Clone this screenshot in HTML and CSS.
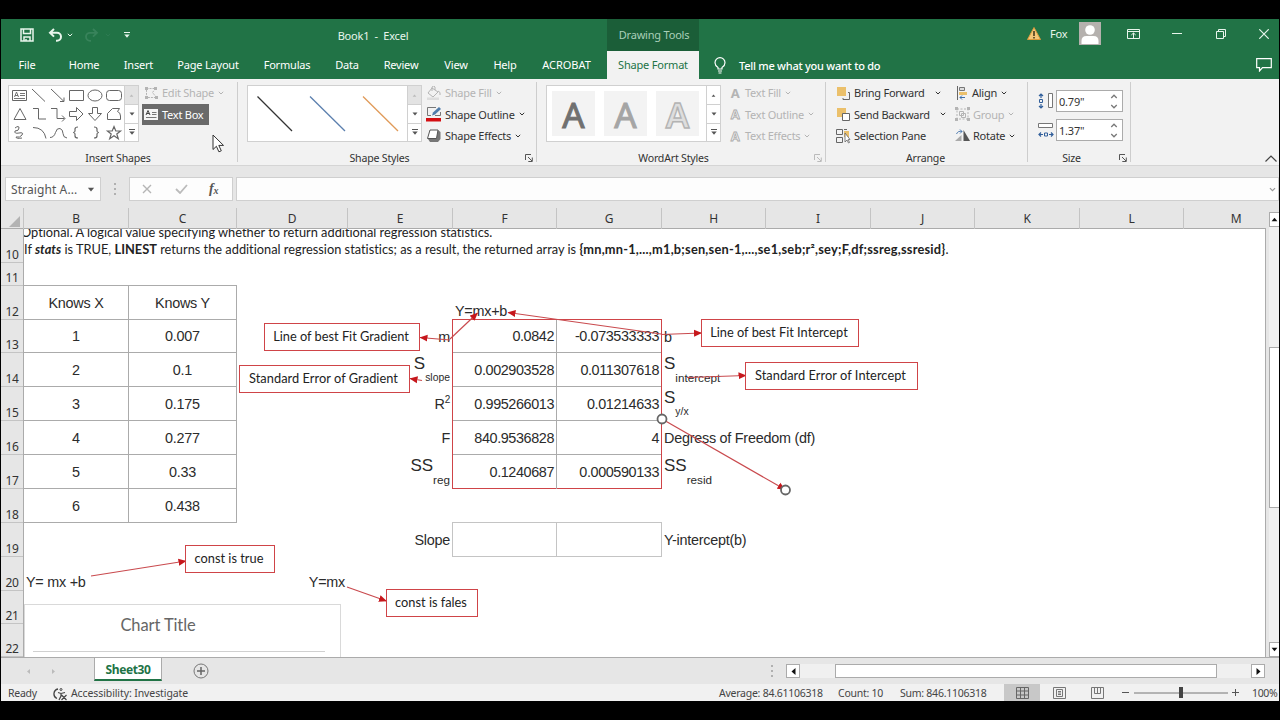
FILE: index.html
```html
<!DOCTYPE html>
<html lang="en">
<head>
    <meta charset="UTF-8" />
    <meta name="viewport" content="width=device-width, initial-scale=1.0"/>
    <title>Book1 - Excel</title>
    <link rel="stylesheet" href="styles.css">
</head>
<body>

    <!-- Shared icons -->
    <svg class="sprite" width="0" height="0">
        <symbol id="chev" viewBox="0 0 6 4"><path d="M.8 .8 L3 3 L5.2 .8" fill="none" stroke="currentColor"/></symbol>
        <symbol id="up" viewBox="0 0 6 4"><path d="M.5 3.5h5L3 .5z" fill="currentColor"/></symbol>
        <symbol id="down" viewBox="0 0 6 4"><path d="M.5 .5h5L3 3.5z" fill="currentColor"/></symbol>
        <symbol id="more" viewBox="0 0 6 6"><path d="M0 .5h6" stroke="currentColor"/><path d="M.3 2.5h5.4L3 5.8z" fill="currentColor"/></symbol>
        <symbol id="launch" viewBox="0 0 8 8"><path d="M.5 6V.5H6M3 3l4 4M7.3 3.5v4h-4" fill="none" stroke="currentColor"/></symbol>
    </svg>

    <div class="window">
        <!-- Title bar -->
        <header class="titlebar">
            <div class="quick">
                <svg class="save" width="14" height="14" viewBox="0 0 14 14"><path d="M1 1h12v12H1zM3.500 1v4.500h7V1M4 13V9h6v4M6 11v2" fill="none" stroke="currentColor" stroke-width="1.500"/></svg>
                <svg class="undo" width="15" height="14" viewBox="0 0 15 14"><path d="M6 1L2 4.8 6 8.6M2 4.8h7a4 4 0 0 1 0 8H8" fill="none" stroke="currentColor" stroke-width="2"/></svg>
                <svg class="undo-more" width="6" height="4"><use href="#chev"/></svg>
                <svg class="redo" width="15" height="14" viewBox="0 0 15 14"><path d="M9 1l4 3.8L9 8.6M13 4.8H6a4 4 0 0 0 0 8h1" fill="none" stroke="currentColor" stroke-width="1.8"/></svg>
                <svg class="redo-more" width="6" height="4"><use href="#chev"/></svg>
                <svg class="customize" width="6" height="6"><use href="#more"/></svg>
            </div>
            <div class="doc-title">Book1&nbsp; -&nbsp; Excel</div>
            <div class="context-tab">Drawing Tools</div>
            <div class="account">
                <svg width="14" height="13" viewBox="0 0 14 13"><path d="M7 .5L13.5 12.5H.5z" fill="#f3c87a" stroke="#d99a3c"/><path d="M7 4v5M7 10v1.5" stroke="#3d3216" stroke-width="1.5"/></svg>
                <span class="user">Fox</span>
                <svg class="avatar" width="22" height="23" viewBox="0 0 22 23"><path d="M0 0h22v23H0z" fill="#b5b1ae"/><circle cx="11" cy="8" r="4.8" fill="#fff"/><path d="M2.5 22v-3q0-5 5-5h7q5 0 5 5v3z" fill="#fff"/></svg>
                <svg class="display" width="13" height="10" viewBox="0 0 13 10"><path d="M.5 .5h12v9H.5zM.5 2.5h12M6.5 9V4M4.3 6l2.2-2L8.7 6" fill="none" stroke="currentColor"/></svg>
                <svg class="minimize" width="10" height="10" viewBox="0 0 10 10"><path d="M0 4.5h10" stroke="currentColor"/></svg>
                <svg class="restore" width="10" height="10" viewBox="0 0 10 10"><path d="M.5 2.5h7v7h-7zM2.5 2.5v-2h7v7h-2" fill="none" stroke="currentColor"/></svg>
                <svg class="close" width="10" height="10" viewBox="0 0 10 10"><path d="M.3 .3l9.4 9.4M9.7 .3L.3 9.7" stroke="currentColor" stroke-width="1.2"/></svg>
            </div>
        </header>

        <!-- Ribbon tabs -->
        <nav class="tabs">
            <a class="tab file">File</a>
            <a class="tab home">Home</a>
            <a class="tab insert">Insert</a>
            <a class="tab layout">Page Layout</a>
            <a class="tab formulas">Formulas</a>
            <a class="tab data">Data</a>
            <a class="tab review">Review</a>
            <a class="tab view">View</a>
            <a class="tab help">Help</a>
            <a class="tab acrobat">ACROBAT</a>
            <a class="tab active">Shape Format</a>
            <svg class="bulb" width="12" height="17" viewBox="0 0 12 17"><path d="M4 12V10.5Q1 8.500 1 5.700A5 5 0 0 1 11 5.700Q11 8.500 8 10.500V12zM4 14h4M4.500 16h3" fill="none" stroke="currentColor" stroke-width="1.2"/></svg>
            <span class="tell">Tell me what you want to do</span>
            <svg class="comment" width="16" height="14" viewBox="0 0 16 14"><path d="M.7 .7h14.600v9H6.500L3.500 13V9.700H.7z" fill="none" stroke="currentColor" stroke-width="1.200"/></svg>
        </nav>

        <!-- Ribbon -->
        <section class="ribbon">
            <div class="group insert-shapes">
                <div class="controls">
                    <div class="gallery">
                        <svg width="115" height="55" viewBox="0 0 115 55" fill="none" stroke="#666">
                            <path d="M3.500 4.500h14v10h-14z"/><path d="M5.500 11l2-5 2 5M6 9.500h3M11 7.500h5M11 9.500h5M5 12.500h11" stroke-width=".9"/>
                            <path d="M23 3l13 12.500M42 3l13 12.500M55 11.500v4h-4"/>
                            <path d="M60.500 4.500h14v10h-14z"/><ellipse cx="86" cy="9.500" rx="7" ry="5.500"/><rect x="97.500" y="4.500" width="15" height="10" rx="3"/>
                            <path d="M11 22.500l6 11H5zM24 22.500h5.500v10.500h7.500M42 22.500h6v10h7.500M53 29.500l3 3-3 3"/>
                            <path d="M60.500 25.500h7v-4l6.500 6.500-6.500 6.500v-4h-7zM83.500 21.500h5v6h4L86 34.500 79.500 27.500h4zM98.500 33.500v-6l5-5h7l-2 3q3 1 3 4.500v3.500z"/>
                            <path d="M6 42q4-3 4 0t-4 3q-1 3 4 2t3 2-6 2q0 2 6 1M24 41.500q11 0 13 11M41 51.500q4 0 5.500-5t4.500-4 3 5 4 4.500"/>
                            <path d="M69 41q-3 0-3 2v2q0 1.500-2 1.500 2 0 2 1.500v2q0 2 3 2M85 41q3 0 3 2v2q0 1.500 2 1.500-2 0-2 1.500v2q0 2-3 2" stroke-width="1.200"/>
                            <path d="M105 40.500l1.800 4.500h4.700l-3.700 3 1.500 4.700-4.300-2.900-4.300 2.900 1.500-4.700-3.700-3h4.700z" stroke-width="1.200"/>
                        </svg>
                        <div class="scroller">
                            <span class="off"><svg width="5" height="3"><use href="#up"/></svg></span>
                            <span><svg width="6" height="4"><use href="#down"/></svg></span>
                            <span><svg width="6" height="6"><use href="#more"/></svg></span>
                        </div>
                    </div>
                    <div class="stack">
                        <div class="cmd disabled"><svg width="15" height="14" viewBox="0 0 15 14" fill="none" stroke="currentColor"><path d="M2.500 2.500h9l-3 4 4 5h-10z" stroke-dasharray="2 1"/><path d="M1 1h3v3H1zM10 1h3v3h-3zM1 10h3v3H1zM11 10h3v3h-3z" fill="currentColor" stroke="none"/></svg>Edit Shape<svg class="chev" width="6" height="4"><use href="#chev"/></svg></div>
                        <div class="cmd pressed"><svg width="14" height="11" viewBox="0 0 14 11"><path d="M0 0h14v11H0z" fill="#f5f5f5"/><path d="M2 6l2-4.500L6 6M2.700 4.500h2.600" fill="none" stroke="#444"/><path d="M8 3.500h4.500M8 5.500h4.500M2 8.500h10.500" stroke="#777"/></svg>Text Box</div>
                    </div>
                </div>
                <div class="group-name">Insert Shapes</div>
            </div>

            <div class="group shape-styles">
                <div class="controls">
                    <div class="gallery">
                        <svg width="159" height="55" viewBox="0 0 159 55">
                            <path d="M9.500 10.500L44 45" stroke="#333" stroke-width="1.300"/>
                            <path d="M62 10.500L97 45" stroke="#5b7fae" stroke-width="1.300"/>
                            <path d="M115 10.500L150 45" stroke="#e09a58" stroke-width="1.300"/>
                        </svg>
                        <div class="scroller">
                            <span class="off"><svg width="5" height="3"><use href="#up"/></svg></span>
                            <span><svg width="6" height="4"><use href="#down"/></svg></span>
                            <span><svg width="6" height="6"><use href="#more"/></svg></span>
                        </div>
                    </div>
                    <div class="stack">
                        <div class="cmd disabled"><svg width="16" height="14" viewBox="0 0 16 14"><path d="M6 2l6 4-5 5-5-4zM6 5V1q2-2 3 0v3M12 5q3 1 2 4" fill="none" stroke="currentColor"/><path d="M1 11.500h12V14H1z" fill="#ddd"/></svg>Shape Fill<svg class="chev" width="6" height="4"><use href="#chev"/></svg></div>
                        <div class="cmd"><svg width="16" height="16" viewBox="0 0 16 16"><path d="M10 1.500H1.500v8H5M14.500 6v3.500H9" fill="none" stroke="#777"/><path d="M6 9.500l1-3L13 1l2 2-6 5.500z" fill="#4f7cab"/><path d="M0 12h15v3.500H0z" fill="#d40e12"/></svg>Shape Outline<svg class="chev" width="6" height="4"><use href="#chev"/></svg></div>
                        <div class="cmd"><svg width="16" height="14" viewBox="0 0 16 14"><path d="M2 10l2 3h8l2.500-3V3L12 1z" fill="#777"/><path d="M4 1h8L10.500 9.500h-9z" fill="#fff" stroke="#555"/></svg>Shape Effects<svg class="chev" width="6" height="4"><use href="#chev"/></svg></div>
                    </div>
                </div>
                <div class="group-name">Shape Styles<svg class="launch" width="8" height="8"><use href="#launch"/></svg></div>
            </div>

            <div class="group wordart">
                <div class="controls">
                    <div class="gallery">
                        <div class="letters">
                            <span class="letter dark">A</span>
                            <span class="letter mid">A</span>
                            <span class="letter hollow">A</span>
                        </div>
                        <div class="scroller">
                            <span><svg width="5" height="3"><use href="#up"/></svg></span>
                            <span><svg width="6" height="4"><use href="#down"/></svg></span>
                            <span><svg width="6" height="6"><use href="#more"/></svg></span>
                        </div>
                    </div>
                    <div class="stack">
                        <div class="cmd disabled"><b class="glyph">A</b>Text Fill<svg class="chev" width="6" height="4"><use href="#chev"/></svg></div>
                        <div class="cmd disabled"><b class="glyph outline">A</b>Text Outline<svg class="chev" width="6" height="4"><use href="#chev"/></svg></div>
                        <div class="cmd disabled"><b class="glyph outline">A</b>Text Effects<svg class="chev" width="6" height="4"><use href="#chev"/></svg></div>
                    </div>
                </div>
                <div class="group-name">WordArt Styles<svg class="launch off" width="8" height="8"><use href="#launch"/></svg></div>
            </div>

            <div class="group arrange">
                <div class="controls">
                    <div class="stack order">
                        <div class="cmd"><svg width="15" height="14" viewBox="0 0 15 14"><path d="M1 1h9v9H1z" fill="#ebc06b"/><path d="M12 6.500h1.500v7H7V12" fill="none" stroke="#666"/></svg>Bring Forward<svg class="chev far" width="6" height="4"><use href="#chev"/></svg></div>
                        <div class="cmd"><svg width="15" height="14" viewBox="0 0 15 14"><path d="M1 1h9v9H1z" fill="#ebc06b"/><path d="M6.500 6.500h7v7h-7z" fill="#fff" stroke="#666"/></svg>Send Backward<svg class="chev far" width="6" height="4"><use href="#chev"/></svg></div>
                        <div class="cmd"><svg width="15" height="16" viewBox="0 0 15 16"><path d="M8 3h5v6H8z" fill="#ebc06b"/><path d="M.5 1.500h6v5h-6zM.5 9.500h6v5h-6zM8 1.500h3" fill="none" stroke="#666"/><path d="M9 5v9l2-2 1.500 3 1-.5-1.300-3H14z" fill="#fff" stroke="#666" stroke-width=".8"/></svg>Selection Pane</div>
                    </div>
                    <div class="stack align">
                        <div class="cmd"><svg width="14" height="14" viewBox="0 0 14 14"><path d="M2.500 0v14" stroke="#666"/><path d="M4.500 1.500h5v3h-5z" fill="#ddd" stroke="#777"/><path d="M4 6h8v3H4z" fill="#ebc06b"/><path d="M10 11.500H5M7 9.500l-2 2 2 2" fill="none" stroke="#3d6ea8"/></svg>Align<svg class="chev" width="6" height="4"><use href="#chev"/></svg></div>
                        <div class="cmd disabled"><svg width="15" height="14" viewBox="0 0 15 14" fill="none" stroke="currentColor"><path d="M2 2h11v10H2z" stroke-dasharray="2 1.500"/><path d="M4.500 4.500h4v4h-4zM6.500 6.500h4v4h-4z"/><path d="M0 0h3v3H0zM12 0h3v3h-3zM0 11h3v3H0zM12 11h3v3h-3z" fill="currentColor" stroke="none"/></svg>Group<svg class="chev" width="6" height="4"><use href="#chev"/></svg></div>
                        <div class="cmd"><svg width="15" height="13" viewBox="0 0 15 13"><path d="M8.500 1v11H15z" fill="#555"/><path d="M6.500 6v6H0z" fill="#aaa"/><path d="M1.500 5Q3 1.500 7 2.500M5 .5l2 2-2 2" fill="none" stroke="#3d6ea8" stroke-width=".9"/></svg>Rotate<svg class="chev" width="6" height="4"><use href="#chev"/></svg></div>
                    </div>
                </div>
                <div class="group-name">Arrange</div>
            </div>

            <div class="group size">
                <div class="fields">
                    <div class="field"><svg width="16" height="16" viewBox="0 0 16 16"><path d="M10.500 .5h4v14h-4z" fill="#fff" stroke="#777"/><path d="M3 1v4M3 11v4M1 3l2-2 2 2M1 13l2 2 2-2" fill="none" stroke="#315f9b" stroke-width="1.200"/><path d="M1.500 6.500h3v3h-3z" fill="none" stroke="#315f9b"/></svg><div class="input">0.79"<span class="spin"><svg class="flip" width="8" height="5"><use href="#chev"/></svg><svg width="8" height="5"><use href="#chev"/></svg></span></div></div>
                    <div class="field"><svg width="16" height="16" viewBox="0 0 16 16"><path d="M.5 1.500h14v4H.5z" fill="#fff" stroke="#777"/><path d="M1 12.500h4M11 12.500h4M3 10.500l-2 2 2 2M13 10.500l2 2-2 2" fill="none" stroke="#315f9b" stroke-width="1.200"/><path d="M6.500 11h3v3h-3z" fill="none" stroke="#315f9b"/></svg><div class="input">1.37"<span class="spin"><svg class="flip" width="8" height="5"><use href="#chev"/></svg><svg width="8" height="5"><use href="#chev"/></svg></span></div></div>
                </div>
                <div class="group-name">Size<svg class="launch" width="8" height="8"><use href="#launch"/></svg></div>
            </div>

            <svg class="collapse" width="12" height="7" viewBox="0 0 12 7"><path d="M.5 6.500L6 1l5.500 5.500" fill="none" stroke="#444" stroke-width="1.200"/></svg>
            <svg class="cursor" width="13" height="19" viewBox="0 0 13 19"><path d="M1 1v14.500l3.400-3.200 2.500 5.500 2.400-1-2.500-5.400h4.700z" fill="#fff" stroke="#333"/></svg>
        </section>

        <!-- Formula bar -->
        <section class="formula-bar">
            <div class="name-box">Straight A...<svg width="8" height="5"><use href="#down"/></svg></div>
            <div class="grip"><i></i><i></i><i></i></div>
            <div class="fx-box">
                <svg width="10" height="10" viewBox="0 0 10 10"><path d="M1 1l8 8M9 1L1 9" stroke="#b5b5b5" stroke-width="1.400"/></svg>
                <svg width="13" height="10" viewBox="0 0 13 10"><path d="M1 5l4 4 7-8" fill="none" stroke="#bbb" stroke-width="1.800"/></svg>
                <span class="fx">f<sub>x</sub></span>
            </div>
            <div class="formula-input"><svg width="7" height="5"><use href="#chev"/></svg></div>
        </section>

        <!-- Worksheet -->
        <main class="sheet">
            <div class="col-heads">
                <span class="corner"><svg width="11" height="11"><path d="M11 0v11H0z" fill="#b3b3b3"/></svg></span>
                <span>B</span><span>C</span><span>D</span><span>E</span><span>F</span><span>G</span><span>H</span><span>I</span><span>J</span><span>K</span><span>L</span><span class="last">M</span>
            </div>
            <div class="body">
                <div class="row-heads">
                    <span>10</span><span>11</span><span>12</span><span>13</span><span>14</span><span>15</span><span>16</span><span>17</span><span>18</span><span>19</span><span>20</span><span>21</span><span>22</span>
                </div>
                <div class="cells">
                    <div class="note r10"><p class="line1">Optional. A logical value specifying whether to return additional regression statistics.</p><p class="line2">If <b><i>stats</i></b> is TRUE, <b>LINEST</b> returns the additional regression statistics; as a result, the returned array is <b class="array">{mn,mn-1,...,m1,b;sen,sen-1,...,se1,seb;r²,sey;F,df;ssreg,ssresid}</b>.</p></div>

                    <div class="known">
                        <span>Knows X</span><span>Knows Y</span>
                        <span>1</span><span>0.007</span>
                        <span>2</span><span>0.1</span>
                        <span>3</span><span>0.175</span>
                        <span>4</span><span>0.277</span>
                        <span>5</span><span>0.33</span>
                        <span>6</span><span>0.438</span>
                    </div>

                    <div class="cell f r12 low">Y=mx+b</div>
                    <div class="cell e r13 end">m</div>
                    <div class="cell e r14 end pair"><span class="big">S</span><span class="small">slope</span></div>
                    <div class="cell e r15 end">R<span class="pow">2</span></div>
                    <div class="cell e r16 end">F</div>
                    <div class="cell e r17 end pair"><span class="big">SS</span><span class="small wide">reg</span></div>

                    <div class="stats">
                        <span>0.0842</span><span>-0.073533333</span>
                        <span>0.002903528</span><span>0.011307618</span>
                        <span>0.995266013</span><span>0.01214633</span>
                        <span>840.9536828</span><span>4</span>
                        <span>0.1240687</span><span>0.000590133</span>
                    </div>

                    <div class="cell h r13">b</div>
                    <div class="cell h r14 pair"><span class="big">S</span><span class="small wide">intercept</span></div>
                    <div class="cell h r15 pair"><span class="big">S</span><span class="small">y/x</span></div>
                    <div class="cell h r16">Degress of Freedom (df)</div>
                    <div class="cell h r17 pair"><span class="big">SS</span><span class="small wide">resid</span></div>

                    <div class="cell e r19 end">Slope</div>
                    <div class="blank"><span></span><span></span></div>
                    <div class="cell h r19">Y-intercept(b)</div>

                    <div class="cell b r20 low">Y= mx +b</div>
                    <div class="cell d r20 low end">Y=mx</div>
                </div>

                <!-- Chart and drawn shapes lie over the cells -->
                <div class="chart"><div class="chart-title">Chart Title</div><div class="plot"></div></div>
                <svg class="arrows" width="1265" height="428" viewBox="0 229 1265 428">
                    <defs>
                        <marker id="head" viewBox="0 0 8 8" refX="7.500" refY="4" markerWidth="8" markerHeight="8" markerUnits="userSpaceOnUse" orient="auto"><path d="M0 0.500L8 4 0 7.500z" fill="#c6171c"/></marker>
                    </defs>
                    <g stroke="#c94a4e" stroke-width="1.200">
                        <path d="M449 340L419 337.500" marker-end="url(#head)"/>
                        <path d="M449 339L476.500 313" marker-end="url(#head)"/>
                        <path d="M660 334L507 312.500" marker-end="url(#head)"/>
                        <path d="M660 334.500L700.500 333" marker-end="url(#head)"/>
                        <path d="M421 380.500L409 378.500" marker-end="url(#head)"/>
                        <path d="M686 377.500L745 375.500" marker-end="url(#head)"/>
                        <path d="M90 576L185 561" marker-end="url(#head)"/>
                        <path d="M346 587L385.500 601" marker-end="url(#head)"/>
                        <path d="M661 419L784 489.500" marker-end="url(#head)"/>
                    </g>
                    <g fill="#fff" stroke="#666" stroke-width="1.800"><circle cx="661" cy="419" r="4.500"/><circle cx="784.500" cy="490" r="4.500"/></g>
                </svg>
                <div class="callout gradient">Line of best Fit Gradient</div>
                <div class="callout gradient-error">Standard Error of Gradient</div>
                <div class="callout intercept">Line of best Fit Intercept</div>
                <div class="callout intercept-error">Standard Error of Intercept</div>
                <div class="callout const-true">const is true</div>
                <div class="callout const-false">const is fales</div>
            </div>
            <div class="vscroll">
                <span class="btn"><svg width="7" height="5"><use href="#up"/></svg></span>
                <span class="thumb"></span>
                <span class="btn"><svg width="7" height="5"><use href="#down"/></svg></span>
            </div>
        </main>

        <!-- Sheet tabs and horizontal scroll -->
        <section class="sheet-tabs">
            <div class="nav-arrows"><svg width="4" height="5"><path d="M4 0v5L1 2.500z" fill="#bbb"/></svg><svg width="4" height="5"><path d="M0 0v5l3-2.500z" fill="#bbb"/></svg></div>
            <div class="sheet-tab">Sheet30</div>
            <svg class="add" width="16" height="16" viewBox="0 0 16 16"><circle cx="8" cy="8" r="7" fill="none" stroke="#777"/><path d="M8 4v8M4 8h8" stroke="#666" stroke-width="1.500"/></svg>
            <div class="grip"><i></i><i></i><i></i></div>
            <div class="hscroll">
                <span class="btn"><svg width="5" height="7"><path d="M4.500 0v7L.5 3.500z" fill="#111"/></svg></span>
                <span class="thumb"></span>
                <span class="btn"><svg width="5" height="7"><path d="M.5 0v7l4-3.500z" fill="#111"/></svg></span>
            </div>
        </section>

        <!-- Status bar -->
        <footer class="status">
            <span class="ready">Ready</span>
            <svg class="access" width="15" height="13" viewBox="0 0 15 13" fill="none" stroke="#444"><path d="M5 1A5 5 0 0 0 4 10.500" stroke-width="1.300"/><circle cx="8" cy="1.500" r="1"/><path d="M5 4.500l3 1 4-1M8 5.500v2.500l-2 4M8.500 7l5 5M13.500 7l-5 5" stroke-width="1.200"/></svg>
            <span class="a11y">Accessibility: Investigate</span>
            <span class="average">Average: 84.61106318</span>
            <span class="count">Count: 10</span>
            <span class="sum">Sum: 846.1106318</span>
            <span class="mode on"><svg width="13" height="12" viewBox="0 0 13 12"><path d="M.5 .5h12v11H.5zM4.500 .5v11M8.500 .5v11M.5 4h12M.5 8h12" fill="none" stroke="#666"/></svg></span>
            <span class="mode"><svg width="13" height="12" viewBox="0 0 13 12"><path d="M.5 .5h12v11H.5zM3.500 2.500h6v7h-6zM5 4.500h3M5 6h3M5 7.500h3" fill="none" stroke="#777"/></svg></span>
            <span class="mode"><svg width="13" height="12" viewBox="0 0 13 12"><path d="M.5 .5h12v11H.5zM3.500 .5v6h6v-6M6.500 .5v6" fill="none" stroke="#777"/></svg></span>
            <svg class="zoom" width="118" height="12" viewBox="0 0 118 12"><path d="M1 5.500h7M111 5.500h7M114.500 2v7" stroke="#555"/><path d="M13 6h94" stroke="#777"/><path d="M58 0h4v11h-4z" fill="#444"/></svg>
            <span class="percent">100%</span>
        </footer>
    </div>

</body>
</html>
```
FILE: styles.css
```css
:root {
    --green: #217346;
    --dark-green: #1b5e38;
    --ribbon: #f2f2f2;
    --chrome: #e6e6e6;
    --line: #ababab;
    --red: #cf4448;
}

* {
    box-sizing: border-box;
}

body {
    margin: 0;
    height: 720px;
    padding: 19px 1px;
    background: #000;
    font-family: "Noto Sans", "Open Sans", sans-serif;
    font-size: 11px;
    letter-spacing: -0.2px;
    color: #333;
    overflow: hidden;
}

svg {
    display: block;
    flex: none;
}

.sprite {
    position: absolute;
}

.window {
    width: 1278px;
    height: 682px;
    background: var(--chrome);
    overflow: hidden;
    white-space: nowrap;
}

/* Title bar */
.titlebar {
    display: flex;
    height: 32px;
    background: var(--green);
    color: #e8f5ec;
}

.quick {
    display: flex;
    align-items: center;
    width: 250px;
    padding-left: 19px;
}

.undo {
    margin-left: 14px;
}

.undo-more {
    margin-left: 4px;
}

.redo {
    margin-left: 11px;
    color: #38835b;
}

.redo-more {
    margin-left: 6px;
    color: #2d7a52;
}

.customize {
    margin-left: 13px;
}

.doc-title {
    width: 244px;
    line-height: 34px;
    text-align: center;
}

.context-tab {
    width: 92px;
    margin-left: 112px;
    padding-left: 2px;
    background: var(--dark-green);
    color: #a9cfb9;
    text-align: center;
    line-height: 31px;
}

.account {
    display: flex;
    align-items: center;
    margin-left: auto;
    padding: 0 10px 3px 0;
}

.user {
    width: 29px;
    margin-left: 9px;
}

.display {
    margin-left: 26px;
}

.minimize {
    margin-left: 32px;
}

.restore {
    margin-left: 34px;
}

.close {
    margin-left: 33px;
}

/* Ribbon tabs */
.tabs {
    display: flex;
    align-items: center;
    height: 28px;
    background: var(--green);
    color: #fff;
}

.tab {
    height: 28px;
    line-height: 28px;
    text-align: center;
}

.file { width: 52px; }
.home { width: 62px; }
.insert { width: 47px; }
.layout { width: 92px; }
.formulas { width: 66px; }
.data { width: 54px; }
.review { width: 54px; }
.view { width: 56px; }
.help { width: 42px; }
.acrobat { width: 81px; letter-spacing: 0; }

.tab.active {
    width: 92px;
    background: var(--ribbon);
    color: var(--green);
}

.bulb {
    margin-left: 15px;
}

.tell {
    margin-left: 13px;
    font-weight: 500;
    letter-spacing: -0.25px;
}

.comment {
    margin: 0 7px 0 auto;
}

/* Ribbon */
.ribbon {
    position: relative;
    display: flex;
    height: 87px;
    background: var(--ribbon);
    border-bottom: 1px solid #d5d5d5;
}

.group {
    display: grid;
    grid-template-rows: 68px 12px;
    height: 80px;
    margin-top: 3px;
    border-right: 1px solid #cdcdcd;
}

.insert-shapes { width: 237px; }
.shape-styles { width: 299px; }
.wordart { width: 289px; }
.arrange { width: 202px; }
.size { width: 103px; }

.controls {
    display: flex;
    padding-left: 9px;
}

.insert-shapes .controls {
    padding-left: 7px;
}

.arrange .controls {
    padding-left: 8px;
}

.gallery {
    display: flex;
    height: 57px;
    margin-top: 3px;
    border: 1px solid #d0d0d0;
    background: #fff;
}

.scroller {
    display: grid;
    grid-template-rows: repeat(3, 1fr);
    width: 14px;
    border-left: 1px solid #d0d0d0;
}

.scroller span {
    display: grid;
    place-items: center;
    color: #555;
}

.scroller span + span {
    border-top: 1px solid #d0d0d0;
}

.scroller .off {
    background: #e3e3e3;
    color: #bbb;
}

.stack {
    display: flex;
    flex-direction: column;
    align-items: flex-start;
    margin-left: 3px;
}

.shape-styles .stack {
    margin-left: 2px;
}

.wordart .stack {
    margin-left: 5px;
}

.cmd {
    display: flex;
    align-items: center;
    gap: 3px;
    height: 21.600px;
    padding: 0 2px;
    letter-spacing: -0.25px;
}

.cmd.disabled {
    color: #b4b4b4;
}

.cmd.pressed {
    width: 67px;
    height: 21px;
    gap: 4px;
    background: #6a6a6a;
    color: #fff;
}

.cmd .chev {
    margin-left: 1px;
}

.cmd .far {
    margin-left: 7px;
}

.letters {
    display: flex;
    gap: 9px;
    width: 159px;
    padding: 5px;
}

.letter {
    width: 43px;
    height: 45px;
    background: #f3f3f3;
    text-align: center;
    font-size: 35px;
    line-height: 48px;
    letter-spacing: 0;
    -webkit-text-stroke: 1px currentColor;
}

.dark {
    color: #707070;
}

.mid {
    color: #a5a5a5;
}

.hollow {
    color: #dedede;
    font-weight: 600;
    -webkit-text-stroke: 1.400px #b3b3b3;
}

.glyph {
    width: 14px;
    font-size: 13px;
    text-align: center;
}

.outline {
    color: #f2f2f2;
    -webkit-text-stroke: 0.800px #aaa;
}

.stack.order {
    margin-left: 0;
    width: 119px;
}

.stack.align {
    margin-left: 0;
}

.group-name {
    position: relative;
    padding-right: 15px;
    text-align: center;
    font-size: 10.600px;
    line-height: 16px;
}

.insert-shapes .group-name,
.arrange .group-name {
    padding-right: 2px;
}

.launch {
    position: absolute;
    right: 3px;
    top: 4px;
    color: #555;
}

.launch.off {
    color: #bbb;
}

.fields {
    display: flex;
    flex-direction: column;
    gap: 7px;
    padding: 8px 0 0 10px;
}

.field {
    display: flex;
    align-items: center;
    gap: 2px;
}

.input {
    display: flex;
    justify-content: space-between;
    align-items: center;
    width: 67px;
    height: 22px;
    padding: 0 4px 0 2px;
    border: 1px solid #ababab;
    background: #fff;
}

.spin {
    display: grid;
    gap: 5px;
    color: #777;
}

.flip {
    transform: scaleY(-1);
}

.collapse {
    margin: 76px 2px 0 auto;
}

.cursor {
    position: absolute;
    left: 211px;
    top: 55px;
}

/* Formula bar */
.formula-bar {
    display: flex;
    height: 42px;
    padding: 11px 0 7px 4px;
}

.name-box,
.fx-box,
.formula-input {
    display: flex;
    align-items: center;
    height: 24px;
    border: 1px solid #cfcfcf;
    background: #fdfdfd;
}

.name-box {
    justify-content: space-between;
    width: 96px;
    padding: 0 5px;
    font-size: 12px;
    letter-spacing: 0.1px;
    color: #555;
}

.grip {
    display: grid;
    align-content: center;
    gap: 3px;
    width: 28px;
    justify-items: center;
}

.grip i {
    width: 2px;
    height: 2px;
    background: #b0b0b0;
}

.fx-box {
    width: 104px;
    padding-left: 12px;
}

.fx-box svg + svg {
    margin-left: 23px;
}

.fx {
    margin-left: 21px;
    font: italic bold 14px "Liberation Serif", serif;
    color: #555;
}

.fx sub {
    font-size: 10px;
    line-height: 0;
    vertical-align: -1px;
}

.formula-input {
    flex: 1;
    justify-content: flex-end;
    margin-left: 3px;
    padding-right: 2px;
    color: #999;
}

/* Worksheet */
.sheet {
    display: grid;
    grid-template: 21px 428px / 1265px 13px;
    height: 449px;
}

.col-heads {
    grid-column: 1 / -1;
    grid-row: 1;
    display: grid;
    grid-template-columns: 23px 105px 108px 111px 105px 104px 105px 104px 105px 104px 105px 104px 1fr;
    width: 1265px;
    border-bottom: 1px solid var(--line);
    font-size: 12px;
}

.col-heads span {
    border-right: 1px solid #c4c4c4;
    text-align: center;
    line-height: 22px;
}

.col-heads .corner {
    display: grid;
    place-items: end;
    padding: 0 3px 3px 0;
}

.col-heads .last {
    padding-left: 22px;
    border-right: none;
}

.body {
    position: relative;
    grid-row: 2;
    display: grid;
    grid-template-columns: 23px 1fr;
    background: #fff;
    border-right: 1px solid var(--line);
    overflow: hidden;
}

.row-heads,
.cells {
    display: grid;
    grid-template-rows: 34px 23px 34px 33px 34px 34px 34px 34px 34px 34px 34px 33px 33px;
}

.row-heads {
    background: var(--chrome);
    border-right: 1px solid var(--line);
    font-size: 12px;
    letter-spacing: -0.3px;
}

.row-heads span {
    display: flex;
    justify-content: center;
    align-items: flex-end;
    border-bottom: 1px solid #c4c4c4;
    line-height: 15px;
}

.cells {
    grid-template-columns: 105px 108px 111px 105px 104px 105px 104px 1fr;
    font-family: "Liberation Sans", Arial, sans-serif;
    font-size: 14.400px;
    letter-spacing: -0.25px;
    color: #2b2b2b;
}

.b { grid-column: 1; }
.d { grid-column: 3; }
.e { grid-column: 4; }
.f { grid-column: 5; }
.h { grid-column: 7; }

.r10 { grid-row: 1; }
.r12 { grid-row: 3; }
.r13 { grid-row: 4; }
.r14 { grid-row: 5; }
.r15 { grid-row: 6; }
.r16 { grid-row: 7; }
.r17 { grid-row: 8; }
.r19 { grid-row: 10; }
.r20 { grid-row: 11; }

.cell {
    display: flex;
    align-items: center;
    padding: 0 2px;
    min-width: 0;
}

.end {
    justify-content: flex-end;
    padding-right: 3px;
}

.low {
    align-items: flex-end;
    padding-bottom: 1px;
}

.note {
    grid-column: 1 / -1;
    font-family: Lato, sans-serif;
    font-size: 12.800px;
    font-variant-ligatures: none;
    letter-spacing: 0;
    line-height: 17px;
    overflow: hidden;
    color: #222;
}

.note p {
    margin: 0;
}

.note .line1 {
    margin: -5px 0 0 -3px;
}

.array {
    letter-spacing: 0.220px;
}

.known {
    grid-column: 1 / 3;
    grid-row: 3 / 10;
    display: grid;
    grid-template-columns: 105px 108px;
    grid-template-rows: 34px 33px repeat(5, 34px);
    margin-top: -1px;
    border-top: 1px solid var(--line);
}

.known span {
    display: grid;
    place-items: center;
    border-right: 1px solid var(--line);
    border-bottom: 1px solid var(--line);
}

.stats {
    grid-column: 5 / 7;
    grid-row: 4 / 9;
    display: grid;
    grid-template-columns: 104px 104px;
    grid-template-rows: 33px repeat(4, 34px);
    margin: -1px 0 0 -1px;
    border: 1px solid var(--red);
    letter-spacing: -0.400px;
}

.stats span {
    display: flex;
    justify-content: flex-end;
    align-items: center;
    padding-right: 2px;
    border-right: 1px solid var(--line);
    border-bottom: 1px solid var(--line);
}

.stats span:nth-child(even) {
    border-right: none;
}

.stats span:nth-last-child(-n+2) {
    border-bottom: none;
}

.blank {
    grid-column: 5 / 7;
    grid-row: 10;
    display: grid;
    grid-template-columns: 104px 1fr;
    margin: -1px 0 0 -1px;
    border: 1px solid #c4c4c4;
}

.blank span:first-child {
    border-right: 1px solid #c4c4c4;
}

.big {
    align-self: flex-start;
    font-size: 17px;
    line-height: 22px;
    letter-spacing: 0;
}

.small {
    align-self: flex-end;
    font-size: 10.400px;
    line-height: 18px;
    letter-spacing: 0;
}

.wide {
    font-size: 11.700px;
}

.pow {
    align-self: flex-start;
    margin-top: 7px;
    font-size: 10px;
    line-height: 12px;
}

/* Drawing layer */
.chart {
    position: absolute;
    left: 23px;
    top: 375px;
    width: 317px;
    height: 60px;
    padding: 9px 0 0 8px;
    border: 1px solid #d9d9d9;
    background: #fff;
}

.chart-title {
    width: 250px;
    text-align: center;
    font-family: Lato, sans-serif;
    font-size: 16.500px;
    line-height: 22px;
    letter-spacing: -0.1px;
    font-variant-ligatures: none;
    color: #666;
}

.plot {
    width: 292px;
    height: 20px;
    margin-top: 15px;
    border-top: 1px solid #d0d0d0;
}

.arrows {
    position: absolute;
    left: 0;
    top: 0;
}

.callout {
    position: absolute;
    height: 28px;
    padding-right: 2px;
    border: 1px solid var(--red);
    background: #fff;
    font-family: Lato, sans-serif;
    font-size: 12.800px;
    line-height: 25px;
    letter-spacing: 0;
    font-variant-ligatures: none;
    text-align: center;
    color: #222;
}

.gradient { left: 263px; top: 94px; width: 156px; }
.gradient-error { left: 238px; top: 136px; width: 171px; letter-spacing: 0.05px; }
.intercept { left: 700px; top: 90px; width: 158px; }
.intercept-error { left: 744px; top: 133px; width: 173px; letter-spacing: 0.05px; }
.const-true { left: 184px; top: 316px; width: 90px; }
.const-false { left: 385px; top: 360px; width: 92px; }

/* Scroll bars */
.vscroll {
    grid-column: 2;
    grid-row: 1 / 3;
    display: flex;
    flex-direction: column;
    justify-content: space-between;
    margin: 4px 0 0 3px;
    background: #f0f0f0;
}

.btn,
.thumb {
    display: grid;
    place-items: center;
    border: 1px solid #ababab;
    background: #fff;
    color: #111;
}

.vscroll .btn {
    height: 15px;
    border-right: none;
}

.vscroll .thumb {
    height: 161px;
    margin-bottom: 14px;
    border-right: none;
}

/* Sheet tabs */
.sheet-tabs {
    display: flex;
    height: 27px;
    border-top: 1px solid var(--line);
}

.nav-arrows {
    display: flex;
    align-items: center;
    gap: 22px;
    width: 93px;
    padding-left: 25px;
}

.sheet-tab {
    width: 68px;
    height: 23px;
    border: 1px solid var(--line);
    border-top: none;
    border-bottom: 2px solid var(--green);
    background: #fff;
    color: var(--green);
    font-size: 12px;
    font-weight: bold;
    line-height: 24px;
    letter-spacing: -0.4px;
    text-align: center;
}

.add {
    margin: 5px 0 0 31px;
}

.sheet-tabs .grip {
    margin-left: 549px;
}

.hscroll {
    display: flex;
    width: 479px;
    height: 14px;
    margin-top: 6px;
    background: #f0f0f0;
}

.hscroll .btn {
    width: 14px;
}

.hscroll .thumb {
    width: 382px;
    margin: 0 34px 0 35px;
}

/* Status bar */
.status {
    display: flex;
    align-items: center;
    height: 17px;
    background: #f1f1f1;
    font-size: 10.500px;
    line-height: 15px;
    letter-spacing: -0.25px;
    color: #444;
}

.status > span:not(.mode) {
    padding-top: 2px;
}

.ready {
    width: 46px;
    padding-left: 7px;
}

.access {
    margin: 3px 0 0 6px;
}

.a11y {
    width: 651px;
    padding-left: 3px;
    letter-spacing: -0.1px;
}

.average {
    width: 119px;
}

.count {
    width: 62px;
}

.sum {
    width: 104px;
}

.mode {
    display: grid;
    place-items: center;
    width: 38px;
    height: 17px;
}

.mode.on {
    width: 36px;
    background: #c8c8c8;
}

.zoom {
    margin-left: 5px;
}

.percent {
    margin-left: 13px;
    letter-spacing: -0.35px;
}
```
